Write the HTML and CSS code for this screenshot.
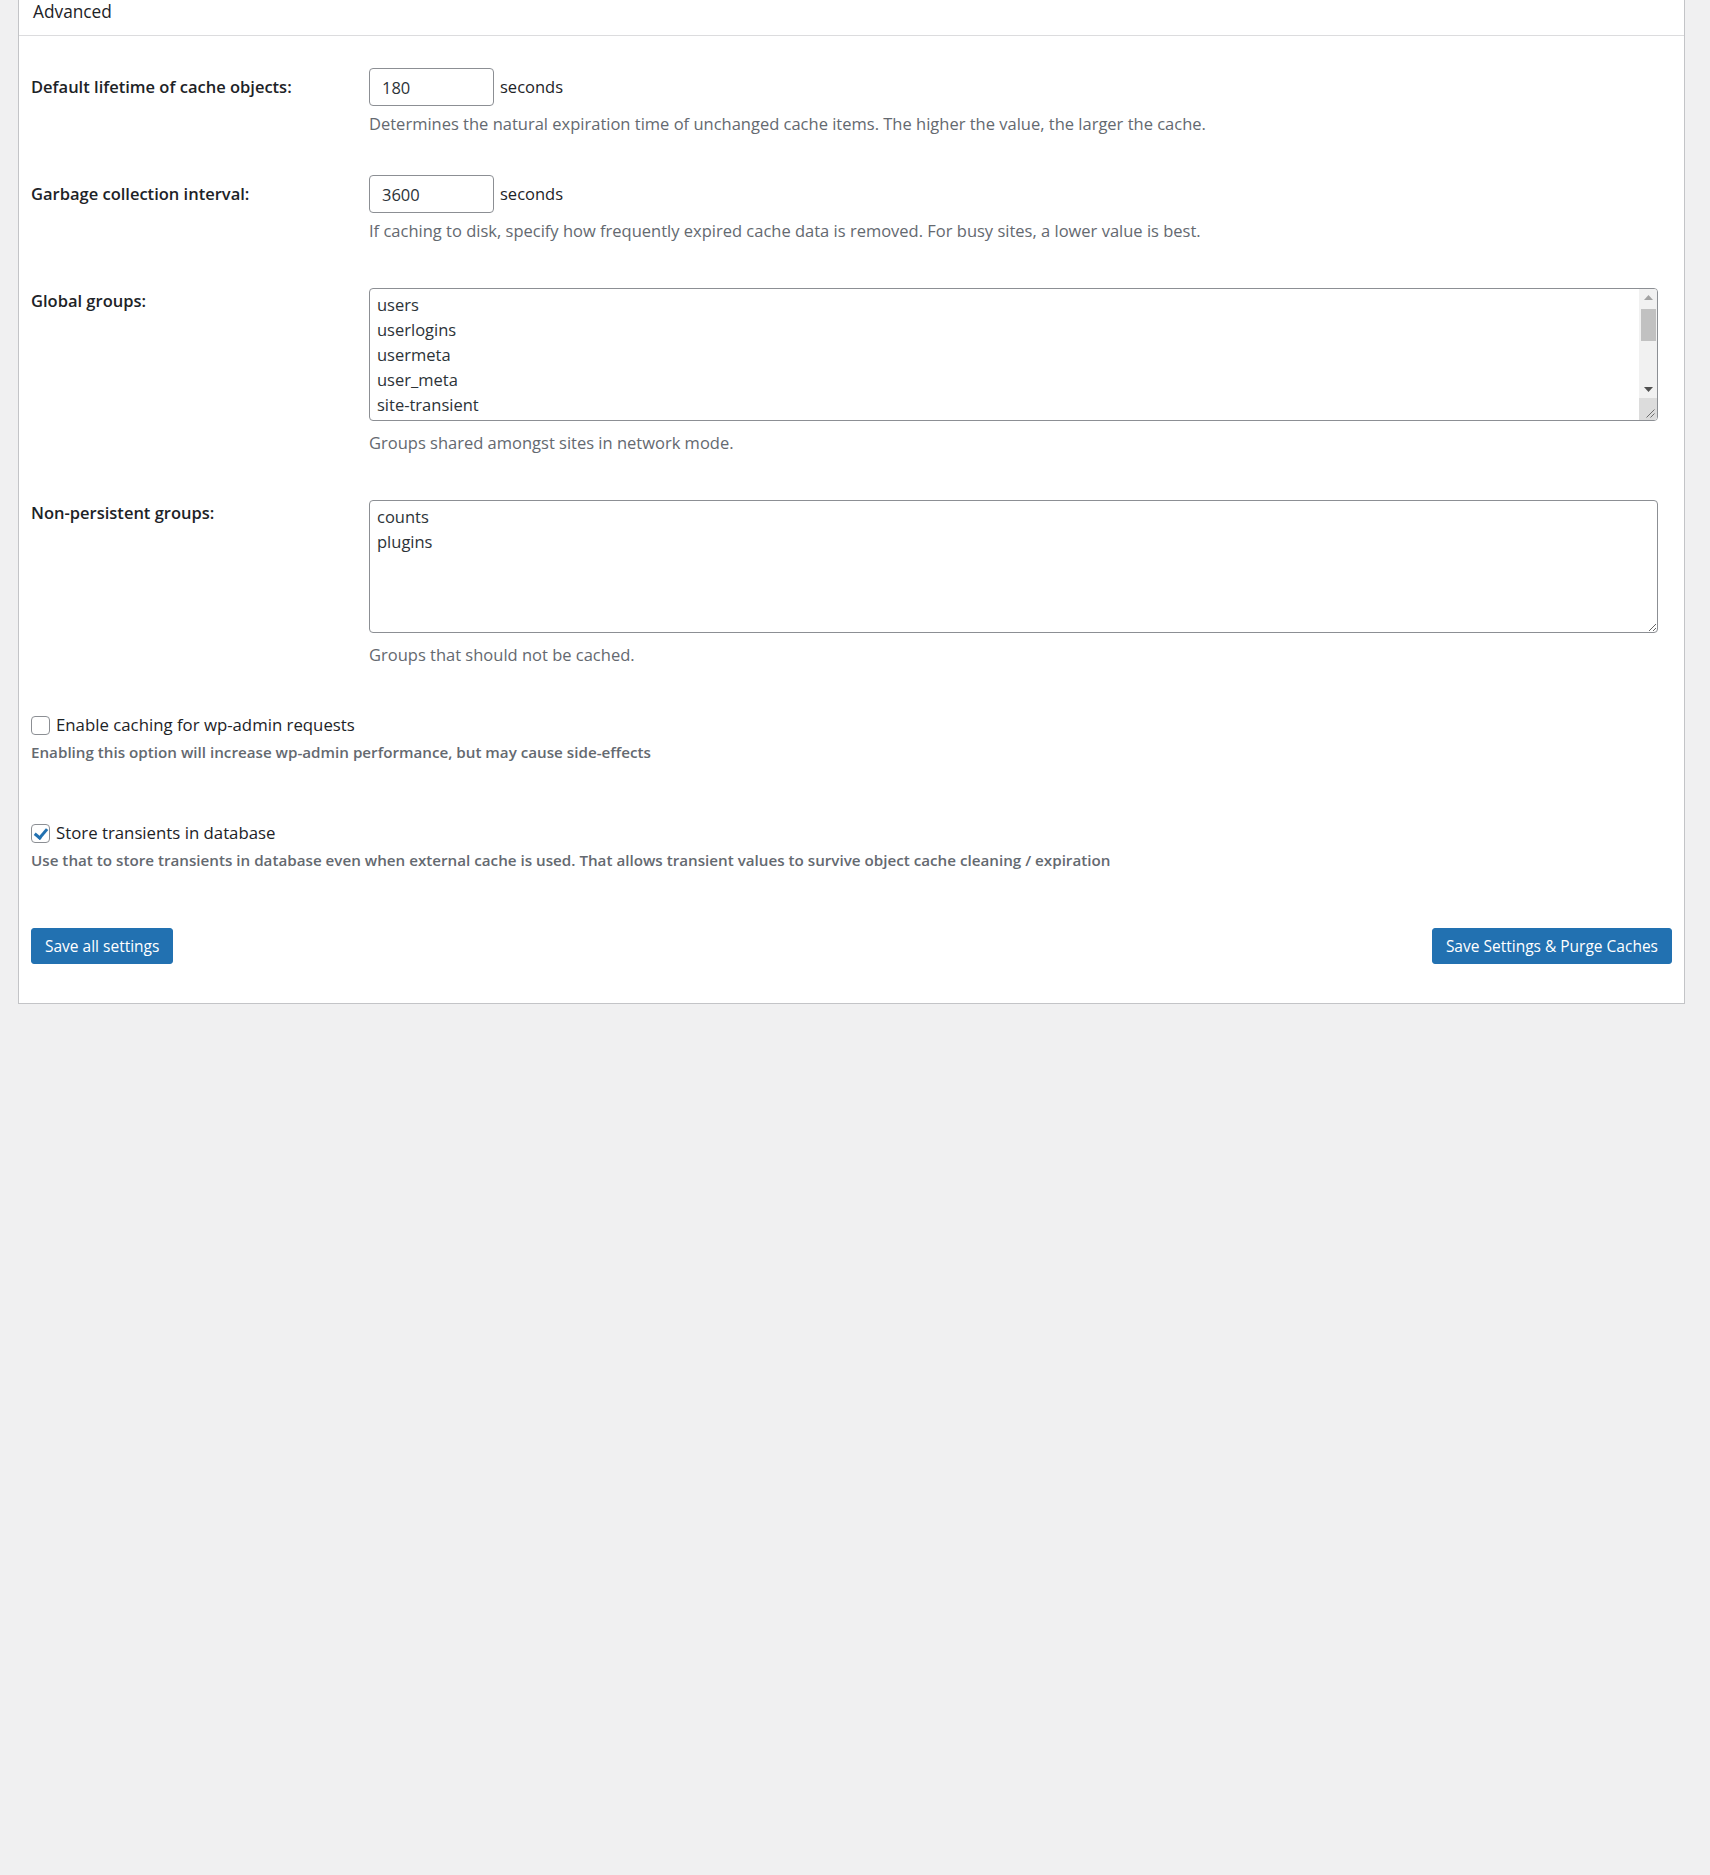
FILE: index.html
```html
<!DOCTYPE html>
<html lang="en">
<head>
    <meta charset="UTF-8">
    <meta name="viewport" content="width=device-width, initial-scale=1.0">
    <title>Advanced - Object Cache Settings</title>
    <link rel="stylesheet" href="styles.css">
</head>
<body>
    <div class="postbox">
        <div class="postbox-header">
            <h2 class="hndle">Advanced</h2>
        </div>
        <div class="inside">
            <div class="form-row">
                <label class="row-label" for="lifetime">Default lifetime of cache objects:</label>
                <div class="row-field">
                    <div class="input-line">
                        <input type="text" id="lifetime" class="small-text" value="180">
                        <span>seconds</span>
                    </div>
                    <p class="description">Determines the natural expiration time of unchanged cache items. The higher the value, the larger the cache.</p>
                </div>
            </div>
            <div class="form-row">
                <label class="row-label" for="gc-interval">Garbage collection interval:</label>
                <div class="row-field">
                    <div class="input-line">
                        <input type="text" id="gc-interval" class="small-text" value="3600">
                        <span>seconds</span>
                    </div>
                    <p class="description">If caching to disk, specify how frequently expired cache data is removed. For busy sites, a lower value is best.</p>
                </div>
            </div>
            <div class="form-row form-row-area">
                <label class="row-label" for="global-groups">Global groups:</label>
                <div class="row-field">
                    <div class="area-wrap">
                        <textarea id="global-groups" class="groups-field groups-scroll" rows="5">users
userlogins
usermeta
user_meta
site-transient
site-options
site-lookup
blog-lookup
blog-details
rss
global-posts
blog-id-cache
networks
sites</textarea>
                        <!-- drawn scrollbar, the browser hides the real one -->
                        <div class="fake-scrollbar">
                            <div class="sb-button">
                                <svg width="9" height="5" viewBox="0 0 9 5"><polygon points="4.5,0 9,5 0,5" fill="#a3a3a3"/></svg>
                            </div>
                            <div class="sb-track">
                                <div class="sb-thumb"></div>
                            </div>
                            <div class="sb-button">
                                <svg width="9" height="5" viewBox="0 0 9 5"><polygon points="0,0 9,0 4.5,5" fill="#505050"/></svg>
                            </div>
                            <div class="sb-corner">
                                <svg width="10" height="10" viewBox="0 0 10 10"><path d="M9.5 1.5 L1.5 9.5 M9.5 5.5 L5.5 9.5" stroke="#6d6d6d" stroke-width="1" fill="none"/></svg>
                            </div>
                        </div>
                    </div>
                    <p class="description">Groups shared amongst sites in network mode.</p>
                </div>
            </div>
            <div class="form-row form-row-area">
                <label class="row-label" for="nonpersistent-groups">Non-persistent groups:</label>
                <div class="row-field">
                    <textarea id="nonpersistent-groups" class="groups-field" rows="5">counts
plugins</textarea>
                    <p class="description">Groups that should not be cached.</p>
                </div>
            </div>

            <div class="check-row">
                <label class="check-label"><input type="checkbox" class="check"> Enable caching for wp-admin requests</label>
                <p class="check-note">Enabling this option will increase wp-admin performance, but may cause side-effects</p>
            </div>
            <div class="check-row">
                <label class="check-label"><input type="checkbox" class="check" checked> Store transients in database</label>
                <p class="check-note">Use that to store transients in database even when external cache is used. That allows transient values to survive object cache cleaning / expiration</p>
            </div>

            <div class="submit-bar">
                <button class="button-primary">Save all settings</button>
                <button class="button-primary">Save Settings &amp; Purge Caches</button>
            </div>
        </div>
    </div>
</body>
</html>
```

FILE: styles.css
```css
body {
    background-color: #f0f0f1;
    color: #1d2327;
    font-family: "Open Sans", "Noto Sans", sans-serif;
    font-size: 16.5px;
    margin: 0;
}
.postbox {
    background-color: #fff;
    border: 1px solid #c3c4c7;
    border-top: none;
    margin: 0 25px 0 18px;
}
.postbox-header {
    height: 35px;
    border-bottom: 1px solid #dcdcde;
    padding-left: 14px;
}
.hndle {
    margin: 0;
    font-size: 17.3px;
    font-weight: 500;
    line-height: 24px;
}
.inside {
    padding: 0 12px 39px 12px;
}
.form-row {
    display: grid;
    grid-template-columns: 338px 1fr;
    padding-top: 39px;
}
.form-row:first-child {
    padding-top: 32px;
}
.form-row-area {
    padding-top: 45px;
}
.row-label {
    font-weight: 600;
    line-height: 24px;
    padding-top: 7px;
}
.form-row-area .row-label {
    padding-top: 1px;
}
.row-field {
    padding-right: 14px;
    line-height: 24px;
}
.input-line {
    display: flex;
    align-items: center;
    gap: 6px;
}
.small-text {
    width: 125px;
    height: 38px;
    box-sizing: border-box;
    border: 1px solid #8c8f94;
    border-radius: 4px;
    padding: 0 12px;
    font-family: inherit;
    font-size: 16.5px;
    color: #2c3338;
    margin: 0;
}
.description {
    color: #646970;
    margin: 6px 0 0 0;
    line-height: 24px;
}
.form-row-area .description {
    margin-top: 10px;
}
.groups-field {
    display: block;
    width: 100%;
    height: 133px;
    box-sizing: border-box;
    border: 1px solid #8c8f94;
    border-radius: 4px;
    padding: 3px 7px 5px 7px;
    font-family: inherit;
    font-size: 16.5px;
    line-height: 25px;
    color: #2c3338;
    resize: vertical;
    margin: 0;
}
.area-wrap {
    position: relative;
}
.groups-scroll {
    overflow: hidden;
    padding-right: 26px;
    resize: none;
}
.fake-scrollbar {
    position: absolute;
    top: 1px;
    right: 1px;
    bottom: 1px;
    width: 18px;
    display: flex;
    flex-direction: column;
    background-color: #f1f1f1;
    border-radius: 0 3px 3px 0;
    overflow: hidden;
}
.sb-button {
    height: 17px;
    display: flex;
    align-items: center;
    justify-content: center;
}
.sb-track {
    flex: 1;
    padding: 3px 1px 0 2px;
}
.sb-thumb {
    height: 32px;
    background-color: #c1c1c1;
}
.sb-corner {
    height: 20px;
    background-color: #dcdcdc;
    display: flex;
    align-items: flex-end;
    justify-content: flex-end;
    padding: 0 2px 2px 0;
}
.check-row {
    margin-top: 46px;
}
.check-row + .check-row {
    margin-top: 58px;
}
.check-label {
    display: flex;
    align-items: center;
    line-height: 24px;
    font-size: 16.8px;
    font-weight: 500;
}
.check {
    appearance: none;
    -webkit-appearance: none;
    width: 19px;
    height: 19px;
    margin: 0 6px 0 0;
    border: 1px solid #8c8f94;
    border-radius: 4px;
    background-color: #fff;
    position: relative;
}
.check:checked::before {
    content: "";
    position: absolute;
    left: 5px;
    top: 1px;
    width: 5px;
    height: 10px;
    border-right: 3px solid #2271b1;
    border-bottom: 3px solid #2271b1;
    transform: rotate(40deg);
}
.check-note {
    margin: 4px 0 0 0;
    font-size: 15.2px;
    font-weight: 600;
    color: #646970;
    line-height: 22px;
}
.submit-bar {
    display: flex;
    justify-content: space-between;
    margin-top: 57px;
}
.button-primary {
    height: 36px;
    padding: 0 13px;
    border: 1px solid #2271b1;
    border-radius: 3px;
    background-color: #2271b1;
    color: #fff;
    font-family: inherit;
    font-size: 15.5px;
    cursor: pointer;
}
.button-primary:hover {
    background-color: #135e96;
}
```
